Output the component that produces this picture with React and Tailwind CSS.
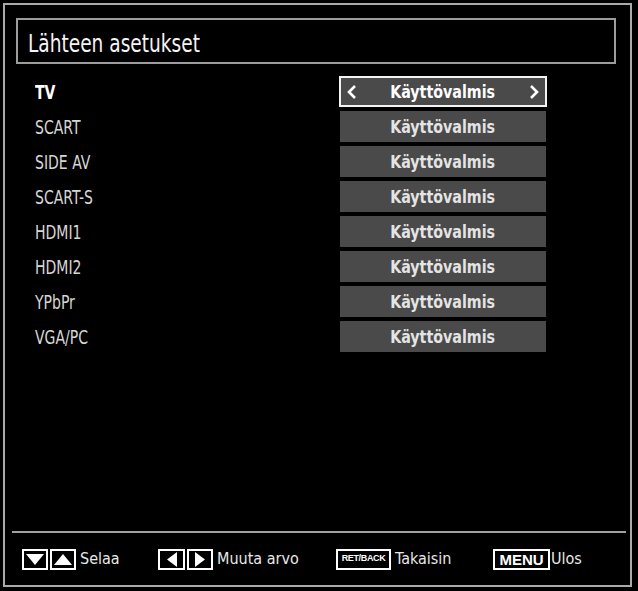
import React from 'react';

const FONT = { fontFamily: '"DejaVu Sans Condensed", "DejaVu Sans", sans-serif' };
const ARIAL = { fontFamily: '"Liberation Sans", Arial, sans-serif' };

const sources = ['TV', 'SCART', 'SIDE AV', 'SCART-S', 'HDMI1', 'HDMI2', 'YPbPr', 'VGA/PC'];

function KeyBox({ children, className = '' }) {
  return (
    <div className={`flex h-[21px] items-center justify-center border-2 border-white bg-black ${className}`}>
      {children}
    </div>
  );
}

function Tri({ dir }) {
  const pts = {
    down: '0,1 18,1 9,12',
    up: '0,12 18,12 9,1',
    left: '12,0 12,15 2,7.5',
    right: '2,0 2,15 12,7.5',
  }[dir];
  const vert = dir === 'up' || dir === 'down';
  return (
    <svg width={vert ? 18 : 14} height={vert ? 13 : 15} viewBox={vert ? '0 0 18 13' : '0 0 14 15'}>
      <polygon points={pts} fill="white" />
    </svg>
  );
}

function Value({ color }) {
  return (
    <span className={`inline-block scale-x-[0.88] text-[18px] font-bold ${color}`}>Käyttövalmis</span>
  );
}

function SourceRow({ name, active }) {
  return (
    <div className="grid h-[31px] grid-cols-[335px_206px] items-center">
      <div className="pl-[30px] pt-[2px]">
        <span
          className={`inline-block origin-left scale-x-[0.82] text-[19px] ${
            active ? 'font-bold text-white' : 'text-[#d6d6d6]'
          }`}
        >
          {name}
        </span>
      </div>
      {active ? (
        <div className="-ml-px flex h-[31px] w-[208px] items-center justify-between border-2 border-[#f2f2f2] bg-[#4a4a4a] px-[6px]">
          <svg width="10" height="16" viewBox="0 0 10 16">
            <polyline points="8,2 2,8 8,14" fill="none" stroke="white" strokeWidth="2.6" />
          </svg>
          <Value color="text-white" />
          <svg width="10" height="16" viewBox="0 0 10 16">
            <polyline points="2,2 8,8 2,14" fill="none" stroke="white" strokeWidth="2.6" />
          </svg>
        </div>
      ) : (
        <div className="flex h-[31px] w-[206px] items-center justify-center bg-[#4a4a4a]">
          <Value color="text-[#e4e4e4]" />
        </div>
      )}
    </div>
  );
}

export default function App() {
  return (
    <div className="h-[591px] w-[638px] bg-black pb-[4px] pl-[3px] pr-[6px] pt-[3px]" style={FONT}>
      <div className="flex h-full flex-col border-2 border-[#a9a9a9]">
        {/* title */}
        <div className="ml-[11px] mr-[14px] mt-[13px] flex h-[46px] items-center border-2 border-[#9c9c9c] pl-[10px] pt-[6px]">
          <span className="inline-block origin-left scale-x-[0.86] text-[24px] text-[#f4f4f4]">Lähteen asetukset</span>
        </div>

        {/* source list */}
        <div className="mt-[12px] flex flex-col gap-[4px]">
          {sources.map((s, i) => (
            <SourceRow key={s} name={s} active={i === 0} />
          ))}
        </div>

        <div className="flex-1" />

        {/* footer */}
        <div className="ml-[7px] mr-[4px] h-[2px] bg-[#a0a0a0]" />
        <div className="grid h-[52px] grid-cols-[136px_178px_157px_1fr] items-center pl-[17px] text-[16px] text-[#e8e8e8]">
          <div className="flex items-center">
            <KeyBox className="w-[26px]"><Tri dir="down" /></KeyBox>
            <KeyBox className="ml-[2px] w-[26px]"><Tri dir="up" /></KeyBox>
            <span className="ml-[4px]">Selaa</span>
          </div>
          <div className="flex items-center">
            <KeyBox className="w-[27px]"><Tri dir="left" /></KeyBox>
            <KeyBox className="ml-[2px] w-[26px]"><Tri dir="right" /></KeyBox>
            <span className="ml-[4px]">Muuta arvo</span>
          </div>
          <div className="flex items-center">
            <KeyBox className="w-[55px]">
              <span className="text-[9px] font-bold tracking-[-0.04em] text-white" style={ARIAL}>
                RET/BACK
              </span>
            </KeyBox>
            <span className="ml-[4px]">Takaisin</span>
          </div>
          <div className="flex items-center">
            <KeyBox className="w-[57px]">
              <span className="text-[15px] font-bold leading-none text-white" style={ARIAL}>
                MENU
              </span>
            </KeyBox>
            <span className="ml-[1px]">Ulos</span>
          </div>
        </div>
      </div>
    </div>
  );
}
